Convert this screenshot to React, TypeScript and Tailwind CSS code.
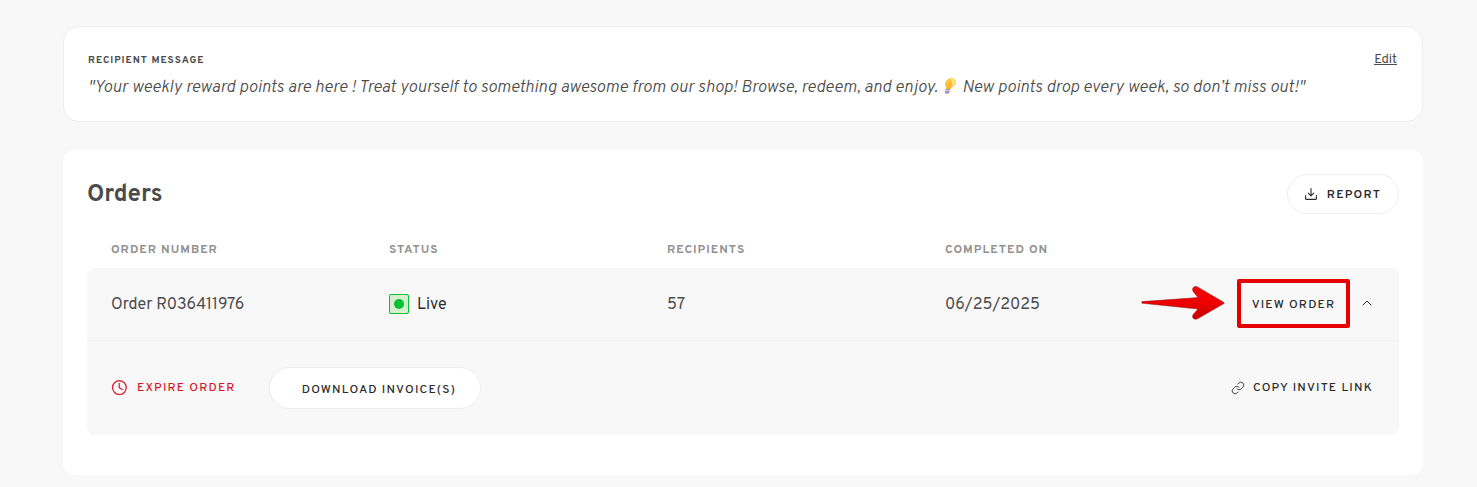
import { ChevronUp, Link } from "lucide-react";

const columns = ["Order Number", "Status", "Recipients", "Completed On"];

const orders = [
  {
    number: "R036411976",
    status: "Live",
    recipients: 57,
    completedOn: "06/25/2025",
  },
];

function BulbIcon() {
  return (
    <svg
      className="mr-px inline-block h-4 w-4 align-[-2px]"
      viewBox="0 0 16 16"
      role="img"
      aria-label="light bulb"
    >
      <path
        d="M5 11C5.4 9.2 3.8 8.6 4 6.1C4.3 2.7 7.2 0.2 10.4 0.2C13.6 0.2 15.2 2.3 14.6 5C14 7.8 10.8 8.6 9.8 11Z"
        fill="#fbc63a"
      />
      <path
        d="M9.4 1C12.4 .4 14.2 2.2 13.7 4.6C13.3 6.5 11.6 7.4 10.6 8.4C11.4 5.8 11.8 3.2 9.4 1Z"
        fill="#ffe58a"
      />
      <path d="M6.6 10.6L7.8 6.8L9.4 5.4L9.8 7L8.6 10.6" fill="none" stroke="#f39c2b" strokeWidth="0.8" />
      <path d="M4.7 11H9.4L8.6 14.2L7.2 15.7H4.6L3.8 14.2Z" fill="#a894bd" />
      <path d="M4.4 12.6H9" stroke="#e4dcec" strokeWidth="0.8" />
    </svg>
  );
}

function DownloadIcon() {
  return (
    <svg
      className="h-3 w-3"
      viewBox="0 0 12 12"
      fill="none"
      stroke="currentColor"
      strokeWidth="1.1"
      strokeLinecap="round"
      strokeLinejoin="round"
      aria-hidden="true"
    >
      <path d="M6 0.6V7.6M3.2 5.2L6 7.8L8.8 5.2" />
      <path d="M0.6 7.6V10.4Q0.6 11.4 1.6 11.4H10.4Q11.4 11.4 11.4 10.4V7.6" />
    </svg>
  );
}

function ClockIcon() {
  return (
    <svg
      className="h-4 w-4"
      viewBox="0 0 16 16"
      fill="none"
      stroke="currentColor"
      strokeWidth="1.2"
      strokeLinecap="round"
      strokeLinejoin="round"
      aria-hidden="true"
    >
      <circle cx="8.4" cy="7.6" r="6.9" />
      <path d="M8.2 3.4V7.8L11.2 9.6" />
    </svg>
  );
}

function Arrow() {
  return (
    <svg
      className="absolute top-1/2 right-full mr-3 h-9 w-[84px] -translate-y-1/2"
      viewBox="0 0 84 36"
      aria-hidden="true"
    >
      <defs>
        <linearGradient id="arrowFill" x1="0" y1="0" x2="0" y2="1">
          <stop offset="0" stopColor="#f40606" />
          <stop offset="0.5" stopColor="#ee0000" />
          <stop offset="1" stopColor="#c40000" />
        </linearGradient>
      </defs>
      <path
        d="M1 16.6L57 12.6L52.5 7C50 3.6 53 0.2 56.5 1.9L82.6 17.2Q83.8 18 82.6 18.8L56.5 33.8C52.6 35.4 50 32.2 52.6 29L57 24L1 18.2Q0.2 17.4 1 16.6Z"
        fill="url(#arrowFill)"
        stroke="#8e1a1a"
        strokeWidth="0.5"
      />
    </svg>
  );
}

function RecipientMessage() {
  return (
    <section className="rounded-2xl border border-[#eeeeee] bg-white px-6 pt-[22px] pb-[21px]">
      <div className="flex items-center justify-between">
        <h2 className="pt-1 text-[10px] leading-4 font-bold tracking-[1px] uppercase">
          Recipient Message
        </h2>
        <a href="#edit" className="mr-px pt-[2px] text-[13px] leading-4 underline">
          Edit
        </a>
      </div>
      <p className="mt-1 pt-[3px] text-[17px] leading-6 font-light italic">
        "Your weekly reward points are here ! Treat yourself to something awesome
        from our shop! Browse, redeem, and enjoy. <BulbIcon /> New points drop
        every week, so don’t miss out!"
      </p>
    </section>
  );
}

function OrdersTable() {
  return (
    <table className="mt-4 w-full table-fixed border-separate border-spacing-0 text-left">
      <thead>
        <tr className="h-[38px] text-xs text-[#929292] uppercase">
          {columns.map((column) => (
            <th key={column} className="pt-[2px] pl-6 font-bold tracking-[1px]">
              {column}
            </th>
          ))}
          <th className="w-[200px]" aria-label="Actions" />
        </tr>
      </thead>
      {orders.map((order) => (
        <tbody key={order.number} className="bg-[#f8f8f8]">
          <tr className="h-[73px] text-base">
            <td className="rounded-tl-lg border-b border-[#eeeeee] pt-[2px] pl-6">
              Order {order.number}
            </td>
            <td className="border-b border-[#eeeeee] pl-6 text-[#2b2b2b]">
              <span className="flex items-center gap-2">
                <span className="flex h-5 w-5 items-center justify-center rounded-xs border border-[#05c132] bg-[#d6f0cd]">
                  <span className="h-[10px] w-[10px] rounded-full bg-[#05c132]" />
                </span>
                <span className="pt-[2px]">{order.status}</span>
              </span>
            </td>
            <td className="border-b border-[#eeeeee] pt-[2px] pl-6">{order.recipients}</td>
            <td className="border-b border-[#eeeeee] pt-[2px] pl-6">{order.completedOn}</td>
            <td className="rounded-tr-lg border-b border-[#eeeeee] pr-6 pb-[2px]">
              <div className="flex items-center justify-end gap-[9px] text-[#2b2b2b]">
                <div className="relative">
                  <Arrow />
                  <button
                    type="button"
                    className="h-[49px] w-[113px] rounded-xs border-4 border-[#e60000] pt-1 text-xs font-medium tracking-widest whitespace-nowrap uppercase"
                  >
                    View Order
                  </button>
                </div>
                <button type="button" aria-label="Collapse order">
                  <ChevronUp className="h-4 w-4" strokeWidth={1.5} />
                </button>
              </div>
            </td>
          </tr>
          <tr className="h-[94px] text-xs text-[#2b2b2b]">
            <td colSpan={5} className="rounded-b-lg pr-[26px] pl-6">
              <div className="flex items-center justify-between">
                <div className="flex items-center gap-[33px]">
                  <button
                    type="button"
                    className="flex items-center gap-[10px] font-medium tracking-widest text-[#d8182a] uppercase"
                  >
                    <ClockIcon />
                    Expire Order
                  </button>
                  <button
                    type="button"
                    className="h-[42px] rounded-full border border-[#eeeeee] bg-white pt-1 pr-6 pl-8 font-medium tracking-widest uppercase"
                  >
                    Download Invoice(s)
                  </button>
                </div>
                <button
                  type="button"
                  className="flex items-center gap-2 font-medium tracking-widest uppercase"
                >
                  <Link className="h-[14px] w-[14px]" strokeWidth={1.5} />
                  Copy Invite Link
                </button>
              </div>
            </td>
          </tr>
        </tbody>
      ))}
    </table>
  );
}

export default function App() {
  return (
    <main className="min-h-screen bg-[#f8f8f8] pt-[26px] pr-[54px] pb-3 pl-[63px] font-['Overpass','Roboto',sans-serif] text-[#4b4b4b]">
      <RecipientMessage />
      <section className="mt-7 rounded-xl bg-white px-6 pt-6 pb-10">
        <div className="flex items-center justify-between">
          <h1 className="pt-[2px] text-2xl font-bold">Orders</h1>
          <button
            type="button"
            className="flex h-10 items-center gap-[10px] rounded-full border border-[#eeeeee] px-[17px] text-xs font-semibold tracking-widest text-[#2b2b2b] uppercase"
          >
            <DownloadIcon />
            <span className="pt-[2px]">Report</span>
          </button>
        </div>
        <OrdersTable />
      </section>
    </main>
  );
}
